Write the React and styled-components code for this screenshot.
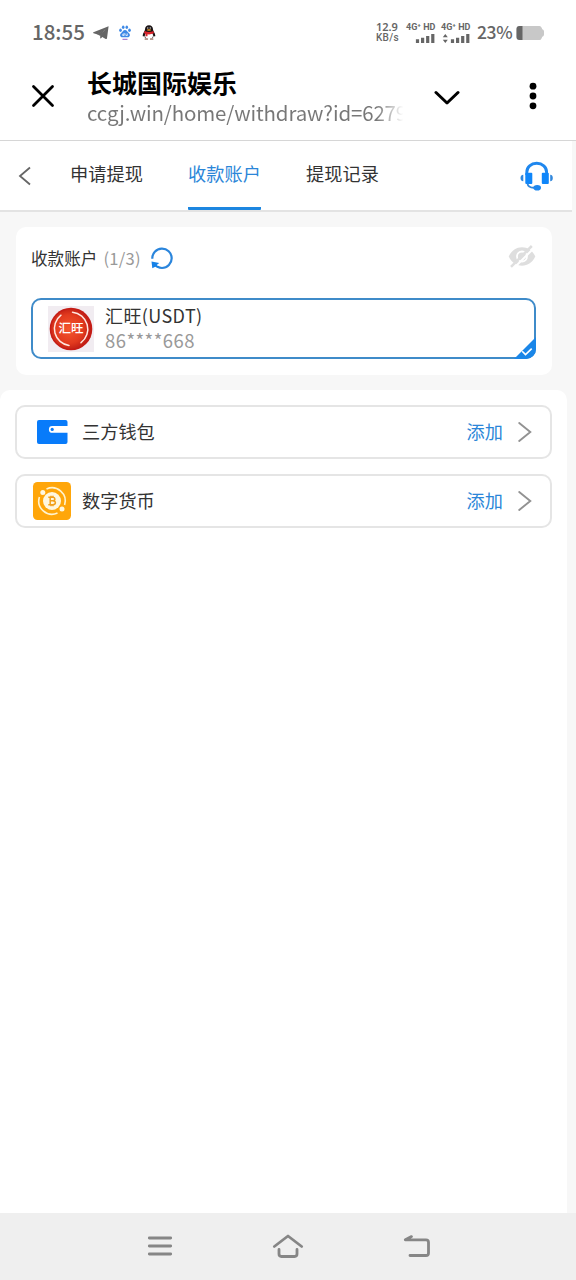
import React, { useState } from "react";
import styled, { createGlobalStyle } from "styled-components";

const tabs = ["申请提现", "收款账户", "提现记录"];

const App = () => {
  const [activeTab, setActiveTab] = useState(1);
  return (
    <>
      <GlobalStyle />
      <Screen>
        <StatusBar>
          <Clock>18:55</Clock>
          <TelegramIcon />
          <PawIcon />
          <PenguinIcon />
          <Speed>
            <b>12.9</b>
            <span>KB/s</span>
          </Speed>
          <Signal>
            <b>4G⁺ HD</b>
            <SignalBars />
          </Signal>
          <Signal>
            <b>4G⁺ HD</b>
            <SignalBars arrows />
          </Signal>
          <Percent>23%</Percent>
          <BatteryIcon />
        </StatusBar>

        <BrowserBar>
          <svg width="24" height="24" viewBox="0 0 24 24">
            <path
              d="M2.5 2.5 21.5 21.5M21.5 2.5 2.5 21.5"
              stroke="#000"
              strokeWidth="2.8"
              strokeLinecap="round"
            />
          </svg>
          <PageInfo>
            <h1>长城国际娱乐</h1>
            <p>ccgj.win/home/withdraw?id=6279</p>
          </PageInfo>
          <svg width="26" height="16" viewBox="0 0 26 16">
            <path
              d="M2 2.5 13 13 24 2.5"
              fill="none"
              stroke="#000"
              strokeWidth="3"
              strokeLinecap="round"
              strokeLinejoin="round"
            />
          </svg>
          <MenuDots width="8" height="28" viewBox="0 0 8 28">
            <circle cx="4" cy="4.2" r="3.4" />
            <circle cx="4" cy="14" r="3.4" />
            <circle cx="4" cy="23.8" r="3.4" />
          </MenuDots>
        </BrowserBar>

        <Content>
          <TabBar>
            <BackArrow width="14" height="20" viewBox="0 0 14 20">
              <path d="M12 1.5 2 10l10 8.5" />
            </BackArrow>
            {tabs.map((tab, i) => (
              <Tab
                key={tab}
                $active={i === activeTab}
                onClick={() => setActiveTab(i)}
              >
                {tab}
              </Tab>
            ))}
            <HeadsetIcon />
          </TabBar>

          <AccountCard>
            <CardTitle>
              <span>收款账户</span>
              <i>(1/3)</i>
              <RefreshIcon />
              <EyeOffIcon />
            </CardTitle>
            <Account>
              <HuiwangLogo />
              <AccountText>
                <span>汇旺(USDT)</span>
                <i>86****668</i>
              </AccountText>
              <Corner width="22" height="22" viewBox="0 0 22 22">
                <path d="M22 0v12a10 10 0 0 1-10 10H0Z" fill="#1a86e8" />
                <path
                  d="m8.2 14.3 3.3 3.3 6.2-6"
                  fill="none"
                  stroke="#fff"
                  strokeWidth="1.6"
                />
              </Corner>
            </Account>
          </AccountCard>

          <Methods>
            <Method>
              <WalletIcon />
              <span>三方钱包</span>
              <AddLink>添加</AddLink>
              <RowArrow />
            </Method>
            <Method>
              <CoinIcon />
              <span>数字货币</span>
              <AddLink>添加</AddLink>
              <RowArrow />
            </Method>
          </Methods>
        </Content>

        <NavBar>
          <svg width="26" height="20" viewBox="0 0 26 20">
            <path d="M2.3 2H23.7M2.3 10H23.7M2.3 18H23.7" />
          </svg>
          <svg width="32" height="24" viewBox="0 0 32 24">
            <path d="M2.3 12.5 16 2 29.7 12.5M7 15.5v4.6q0 2.4 2.4 2.4h13.2q2.4 0 2.4-2.4v-4.6" />
          </svg>
          <svg width="28" height="24" viewBox="0 0 28 24">
            <path d="M8.5 2.6 2.3 5.8H23q2.5 0 2.5 2.5v10.6q0 2.6-2.5 2.6H7" />
          </svg>
        </NavBar>
      </Screen>
    </>
  );
};

export default App;

// Iconos de la barra de estado

const TelegramIcon = () => (
  <svg width="16" height="13" viewBox="0 0 16 13">
    <path
      d="M15.6.3.4 6.3c-.5.3-.4.7.1.9l4.200 1.200L12.500 3.300 7.200 9.200v2.900c.1.500.5.500.800.2l1.300-1.400 3.400 2c.7.3 1.100.1 1.300-.6Z"
      fill="#666"
    />
    <path d="M4.200 8.300 13.500 2 7.300 10Z" fill="#666" />
  </svg>
);

const PawIcon = () => (
  <StatusIcon width="12" height="15" viewBox="0 0 12 15">
    <g fill="#3f8ae6">
      <ellipse cx="1.5" cy="5.2" rx="1.3" ry="1.7" />
      <ellipse cx="4.2" cy="2.2" rx="1.3" ry="1.8" />
      <ellipse cx="7.8" cy="2.2" rx="1.3" ry="1.8" />
      <ellipse cx="10.5" cy="5.2" rx="1.3" ry="1.7" />
      <path d="M6 5c2 0 2.500 2 4 3.300 1.600 1.400 1 4-1.300 4H3.300C1 12.300.4 9.700 2 8.300 3.500 7 4 5 6 5Z" />
    </g>
    <path
      d="M5.200 8v2.500H3.700V9.200h1.500M6.900 8.500v2h1.500v-2"
      fill="none"
      stroke="#fff"
      strokeWidth=".7"
    />
    <path d="M3.500 14.300h5" stroke="#9263c8" strokeWidth="1" />
  </StatusIcon>
);

const PenguinIcon = () => (
  <StatusIcon width="14" height="15" viewBox="0 0 14 15">
    <path
      d="M7 .3c2.600 0 4 1.800 4 4.300 0 1.700 2.300 3.600 2.300 6.200 0 1.200-1 .8-1.600-.3L11 13H3l-.7-2.500c-.6 1.100-1.600 1.500-1.600.3C.7 8.200 3 6.300 3 4.600 3 2.100 4.400.3 7 .3Z"
      fill="#1b1415"
    />
    <ellipse cx="7" cy="10.600" rx="4" ry="3.500" fill="#fff" />
    <ellipse cx="5.800" cy="3" rx=".6" ry=".8" fill="#fff" />
    <ellipse cx="8.200" cy="3" rx=".6" ry=".8" fill="#fff" />
    <ellipse cx="7" cy="5" rx="2.100" ry=".8" fill="#f2a024" />
    <path
      d="M2.600 6Q7 8 11.400 6l.5 2.300Q8.500 9.800 5.500 9.300v2H3.500V8.900l-1.500-.8Z"
      fill="#d9242c"
    />
    <path
      d="M3.200 14h2.300M8.500 14h2.300"
      stroke="#6b3422"
      strokeWidth="1.2"
      strokeLinecap="round"
    />
  </StatusIcon>
);

const SignalBars = ({ arrows }) => (
  <svg width="29" height="9" viewBox="0 0 29 9">
    {arrows && (
      <path d="M4.300 0 1.800 3.300h5ZM4.300 9 1.800 5.700h5Z" fill="#666" />
    )}
    <path
      d="M11.500 9V5.200M16.600 9V3.800M21.700 9V2M26.800 9V0"
      stroke="#666"
      strokeWidth="3.2"
    />
  </svg>
);

const BatteryIcon = () => (
  <StatusIcon width="29" height="14" viewBox="0 0 29 14">
    <path
      d="M3.500 0h20q1.500 0 2 1.500l.8 1.700q1.700.5 1.700 2.300v3q0 1.800-1.700 2.300l-.8 1.700q-.5 1.500-2 1.500h-20Q.5 14 .5 11V3q0-3 3-3Z"
      fill="#c8c8c8"
    />
    <path d="M6.500 0h-3Q.5 0 .5 3v8q0 3 3 3h3Z" fill="#666" />
  </StatusIcon>
);

// Iconos de la página

const HeadsetIcon = () => (
  <Headset width="33" height="30" viewBox="0 0 33 30">
    <path
      d="M6.800 14V11.300C6.800 6 11 2.300 16.700 2.300s9.900 3.700 9.900 9V14"
      fill="none"
      stroke="#1f87ee"
      strokeWidth="2.9"
    />
    <rect x="5.300" y="11.800" width="7" height="11.200" rx="1" fill="#0f86fa" />
    <rect x="21.800" y="11.800" width="7" height="11.200" rx="1" fill="#0f86fa" />
    <path
      d="M3.300 13.800v6.500C1.300 20 .5 18.800.5 17s.8-3 2.800-3.200ZM30.200 13.800v6.500c2-.3 2.600-1.500 2.600-3.300s-.6-3-2.600-3.200Z"
      fill="#3187dc"
    />
    <path
      d="M7.500 22.500q.5 4 6.500 4.300"
      fill="none"
      stroke="#3187dc"
      strokeWidth="1.9"
    />
    <ellipse cx="17.200" cy="26.800" rx="3.800" ry="2.800" fill="#1f87ee" />
  </Headset>
);

const RefreshIcon = () => (
  <Refresh width="24" height="24" viewBox="0 0 24 24">
    <path
      d="M2.300 12.800A9.700 9.700 0 1 1 12 22q-2.300 0-4.500-1.200"
      fill="none"
      stroke="#2a85dc"
      strokeWidth="2.2"
    />
    <path
      d="M1.500 15.500 9.200 17 6.800 19l1.800 1.600-1.300 1.500-2-1.400L2.300 22.300Z"
      fill="#1682e8"
    />
  </Refresh>
);

const EyeOffIcon = () => (
  <EyeOff width="28" height="23" viewBox="0 0 28 23">
    <path
      d="M.7 11.500C3.500 5.500 8.300 2.300 14 2.300s10.500 3.200 13.300 9.200c-2.800 6-7.600 9.200-13.300 9.200S3.500 17.500.7 11.500Z"
      fill="#dedede"
    />
    <circle
      cx="14"
      cy="11.500"
      r="5"
      fill="none"
      stroke="#fff"
      strokeWidth="1.8"
    />
    <path d="M5.500 23.500 27.500 1.500" stroke="#fff" strokeWidth="2" />
    <path d="M3 21.800 23.800 1" stroke="#dedede" strokeWidth="2.5" />
  </EyeOff>
);

const HuiwangLogo = () => (
  <Logo width="46" height="46" viewBox="0 0 46 46">
    <defs>
      <radialGradient id="red" cx=".45" cy=".5" r=".6">
        <stop offset="0" stopColor="#f4572f" />
        <stop offset=".6" stopColor="#e23a1e" />
        <stop offset="1" stopColor="#b51511" />
      </radialGradient>
    </defs>
    <rect width="46" height="46" fill="#f1ecf1" />
    <circle cx="23" cy="23" r="21.300" fill="#c51c16" />
    <circle cx="23" cy="23" r="19.800" fill="url(#red)" />
    <path
      d="M21 39.500A17 17 0 0 1 13 9.200M24.500 6.200A17 17 0 0 1 33 36.700"
      fill="none"
      stroke="#ffe6df"
      strokeWidth="1.5"
      strokeLinecap="round"
    />
    <text x="23" y="27.300" textAnchor="middle">
      汇旺
    </text>
  </Logo>
);

const WalletIcon = () => (
  <svg width="40" height="40" viewBox="0 0 40 40">
    <path
      d="M7 8h26.500q2 0 2 2v20q0 2-2 2H7q-2 0-2-2V10q0-2 2-2Z"
      fill="#087bfa"
    />
    <path d="M36 14H20.300a3.400 3.400 0 0 0 0 6.800H36Z" fill="#fff" />
    <circle cx="20.200" cy="17.400" r="1.600" fill="#087bfa" />
  </svg>
);

const CoinIcon = () => (
  <svg width="40" height="40" viewBox="0 0 40 40">
    <rect x="1" y="1" width="38" height="38" rx="4.500" fill="#ffa60a" />
    <g fill="none" stroke="#fff3cf" strokeWidth="1.6">
      <path d="M14.500 7.900A13.300 13.300 0 0 1 32.600 24" />
      <path d="M25.500 32.100A13.300 13.300 0 0 1 7.400 16" />
    </g>
    <circle cx="20" cy="20" r="9" fill="#fff7e0" />
    <circle cx="10.800" cy="11.500" r="2.500" fill="#fff7e0" />
    <circle cx="30" cy="28" r="2.500" fill="#fff7e0" />
    <path
      d="M17.500 16.300h3.400q2 .2 2 1.800t-2 1.700h-3.400m3.400 0q2.500.2 2.500 2t-2.500 2h-3.400M18.200 16.300v7.500M16.300 16.300h1.900M16.300 23.800h1.900M19 14.800v1.500M21 14.800v1.500M19 23.800v1.500M21 23.800v1.500"
      fill="none"
      stroke="#f2a01c"
      strokeWidth="1.5"
    />
  </svg>
);

const RowArrow = () => (
  <svg width="14" height="20" viewBox="0 0 14 20">
    <path
      d="M1.200 1 12.300 10 1.200 19"
      fill="none"
      stroke="#929292"
      strokeWidth="1.9"
      strokeLinecap="round"
    />
  </svg>
);

// Estilos

const GlobalStyle = createGlobalStyle`
  * {
    box-sizing: border-box;
    margin: 0;
    padding: 0;
  }

  body {
    background-color: #fff;
    font-family: "Noto Sans CJK SC", "Noto Sans", sans-serif;
  }

  i {
    font-style: normal;
  }

  svg {
    display: block;
    flex-shrink: 0;
  }
`;

const Screen = styled.div`
  width: 576px;
  height: 1280px;
  display: flex;
  flex-direction: column;
  overflow: hidden;
`;

const StatusBar = styled.div`
  height: 60px;
  padding: 5px 31px 0 32px;
  display: flex;
  align-items: center;
  color: #666;
`;

const StatusIcon = styled.svg`
  margin-left: 10px;

  & + & {
    margin-left: 11px;
  }
`;

const Clock = styled.span`
  width: 61px;
  font-size: 20.5px;
  font-weight: 500;
  line-height: 24px;
  margin-top: -3px;
`;

const Speed = styled.div`
  width: 31px;
  margin-left: auto;
  display: flex;
  flex-direction: column;
  gap: 1px;
  font-size: 10px;
  white-space: nowrap;

  b {
    font-family: "Noto Sans", sans-serif;
    font-size: 11px;
    line-height: 10px;
    height: 10px;
    font-weight: 600;
  }

  span {
    font-family: Roboto, sans-serif;
    height: 10px;
    line-height: 10px;
    font-weight: 500;
    letter-spacing: 0.3px;
  }
`;

const Signal = styled.div`
  width: 35px;
  display: flex;
  flex-direction: column;
  gap: 2px;

  b {
    font-family: Roboto, "Noto Sans", sans-serif;
    font-size: 9px;
    font-weight: 700;
    line-height: 9px;
    white-space: nowrap;
    margin-left: -1px;
  }

  svg {
    margin-left: -1px;
  }
`;

const Percent = styled.span`
  width: 40px;
  font-size: 17.5px;
  font-weight: 500;
  line-height: 20px;
  letter-spacing: -0.4px;
  margin-top: -1px;

  & + svg {
    margin-left: -1px;
  }
`;

const BrowserBar = styled.div`
  height: 81px;
  padding: 0 39px 0 31px;
  display: flex;
  align-items: center;
  border-bottom: 1px solid #d6d6d6;

  & > svg {
    margin-top: -8px;
  }

  & > svg:nth-child(3) {
    margin: -4px 0 0 29px;
  }
`;

const PageInfo = styled.div`
  width: 318px;
  margin: -8px 0 0 32px;
  white-space: nowrap;

  h1 {
    font-size: 25px;
    font-weight: 700;
    line-height: 37px;
    color: #000;
  }

  p {
    font-size: 20.5px;
    line-height: 32px;
    letter-spacing: -0.15px;
    margin-top: -5px;
    background: linear-gradient(to right, #777 91%, #ffffff 99.5%);
    background-clip: text;
    color: transparent;
  }
`;

const MenuDots = styled.svg`
  margin-left: auto;
`;

const Content = styled.main`
  flex: 1;
  display: flex;
  flex-direction: column;
  background-color: #f7f7f7;
`;

const TabBar = styled.nav`
  width: 572px;
  height: 71px;
  padding: 0 19px 0 18px;
  display: flex;
  align-items: stretch;
  background-color: #fff;
  border-bottom: 2px solid #e3e3e3;

  & > svg {
    align-self: center;
  }
`;

const BackArrow = styled.svg`
  margin-right: 38px;

  path {
    fill: none;
    stroke: #666;
    stroke-width: 1.8;
  }
`;

const Tab = styled.button`
  height: 69px;
  width: 73px;
  margin-right: 45px;
  padding-bottom: 2px;
  border: none;
  border-bottom: 3px solid
    ${({ $active }) => ($active ? "#1c86e0" : "transparent")};
  border-radius: 1px;
  background: none;
  font-family: inherit;
  font-size: 18.2px;
  white-space: nowrap;
  color: ${({ $active }) => ($active ? "#2b86d8" : "#333")};
`;

const Headset = styled.svg`
  margin-left: auto;
`;

const AccountCard = styled.section`
  width: 536px;
  height: 148px;
  margin: 15px 0 15px 16px;
  padding: 0 16px 0 15px;
  background-color: #fff;
  border-radius: 10px;
`;

const CardTitle = styled.div`
  height: 71px;
  padding-bottom: 9px;
  display: flex;
  align-items: center;
  font-size: 16.6px;
  color: #333;

  i {
    width: 37px;
    margin-left: 6px;
    letter-spacing: 0.3px;
    color: #999;
  }
`;

const Refresh = styled.svg`
  margin-left: 10px;
`;

const EyeOff = styled.svg`
  margin: -4px 0 0 auto;
`;

const Account = styled.div`
  position: relative;
  height: 61px;
  padding: 0 15px;
  display: flex;
  align-items: center;
  border: 2px solid #3f8bc9;
  border-radius: 10px;
`;

const Logo = styled.svg`
  text {
    font-family: "Noto Sans CJK SC", sans-serif;
    font-size: 12.5px;
    font-weight: 500;
    fill: #fff;
  }
`;

const AccountText = styled.div`
  margin: -2px 0 0 11px;
  display: flex;
  flex-direction: column;
  font-size: 18px;
  line-height: 25px;
  letter-spacing: 0.4px;
  color: #333;

  i {
    font-size: 18.5px;
    letter-spacing: 0.45px;
    color: #999;
  }
`;

const Corner = styled.svg`
  position: absolute;
  right: -2px;
  bottom: -2px;
`;

const Methods = styled.section`
  width: 567px;
  flex: 1;
  padding: 15px 15px 0;
  display: flex;
  flex-direction: column;
  gap: 15px;
  background-color: #fff;
  border-radius: 10px 10px 0 0;
`;

const Method = styled.div`
  height: 54px;
  padding: 0 18px 0 15px;
  display: flex;
  align-items: center;
  border: 2px solid #e5e5e5;
  border-radius: 10px;
  font-size: 18.2px;
  line-height: 26px;
  color: #333;

  & > span {
    margin-top: -2px;
  }

  & > span:nth-child(2) {
    margin-left: 10px;
  }
`;

const AddLink = styled.span`
  margin: 0 15px 0 auto;
  color: #2b86d8;
`;

const NavBar = styled.footer`
  height: 67px;
  padding: 0 0 2px 1px;
  display: flex;
  align-items: center;
  justify-content: center;
  gap: 99px;
  background-color: #efefef;

  path {
    fill: none;
    stroke: #868686;
    stroke-width: 2.8;
    stroke-linecap: round;
    stroke-linejoin: round;
  }
`;
